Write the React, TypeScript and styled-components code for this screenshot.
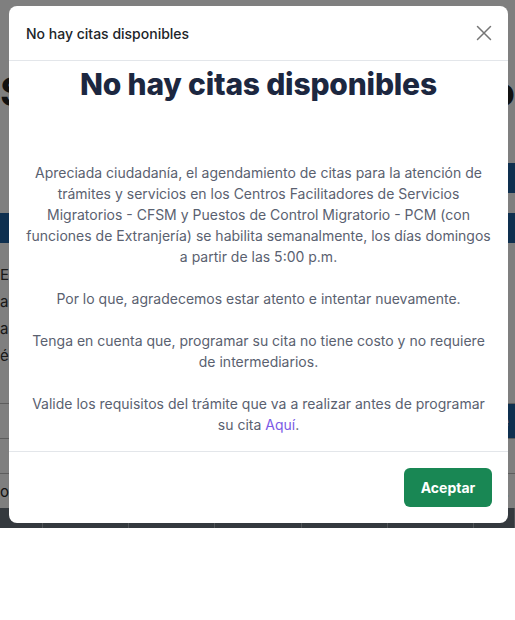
import React from 'react';
import styled, { createGlobalStyle } from 'styled-components';

const GlobalStyle = createGlobalStyle`
  html, body {
    margin: 0;
    padding: 0;
    background: #ffffff;
    font-family: Inter, "Noto Sans", sans-serif;
  }
  * { box-sizing: border-box; }
`;

// Page behind the dialog (mostly hidden)
const Page = styled.div`
  position: relative;
  height: 528px;
  overflow: hidden;
  background: #ffffff;
`;

const PageInner = styled.div`
  display: flex;
  flex-direction: column;
`;

const BigHeading = styled.div`
  height: 163px;
  padding: 72px 0 0 0;
  display: flex;
  justify-content: space-between;
  font-size: 40px;
  font-weight: 700;
  color: #222;
  line-height: 1;
`;

const BlueBar = styled.div<{ $height: number; $left?: boolean }>`
  height: ${({ $height }) => $height}px;
  display: flex;
  align-items: center;
  justify-content: space-between;
  color: #fff;
  font-size: 15px;
  & > span {
    height: 100%;
    width: 40px;
    display: flex;
    align-items: center;
    background: #1c5f9f;
  }
  & > span:first-child {
    background: ${({ $left }) => ($left ? '#1c5f9f' : 'transparent')};
    justify-content: flex-end;
  }
`;

const Spacer = styled.div<{ $height: number }>`
  height: ${({ $height }) => $height}px;
`;

const InfoLines = styled.div`
  display: flex;
  flex-direction: column;
  gap: 8px;
  padding: 22px 0 0 0;
  height: 160px;
  font-size: 15px;
  color: #333;
`;

const RuleRow = styled.div<{ $blue?: boolean }>`
  height: 35px;
  border-top: 1px solid #bbb;
  display: flex;
  align-items: center;
  justify-content: space-between;
  font-size: 15px;
  color: #222;
  & > span:last-child {
    height: 100%;
    display: flex;
    align-items: center;
    padding: 0 6px;
    background: ${({ $blue }) => ($blue ? '#1c5f9f' : 'transparent')};
    color: ${({ $blue }) => ($blue ? '#fff' : '#222')};
  }
`;

const TableHead = styled.div`
  display: grid;
  grid-template-columns: 43px 86px 86px 87px 86px 86px 1fr;
  height: 20px;
  background: #69737d;
  & > span {
    border-right: 1px solid #a0a8b0;
  }
`;

const Overlay = styled.div`
  position: absolute;
  inset: 0;
  background: rgba(0, 0, 0, 0.5);
`;

// Dialog
const Dialog = styled.div`
  position: absolute;
  left: 9px;
  top: 6px;
  width: 499px;
  height: 517px;
  background: #ffffff;
  border-radius: 8px;
  display: flex;
  flex-direction: column;
  overflow: hidden;
`;

const Header = styled.div`
  height: 55px;
  flex: none;
  display: flex;
  align-items: center;
  justify-content: space-between;
  padding: 0 14px 0 17px;
  border-bottom: 1px solid #e3e6ea;
`;

const HeaderTitle = styled.h5`
  margin: 0;
  font-size: 14px;
  font-weight: 500;
  color: #212529;
`;

const CloseButton = styled.button`
  width: 20px;
  height: 20px;
  padding: 0;
  border: 0;
  background: transparent;
  color: #767676;
  display: flex;
  align-items: center;
  justify-content: center;
  cursor: pointer;
`;

const Body = styled.div`
  flex: 1;
  min-height: 0;
  padding: 3px 16px 16px;
  text-align: center;
`;

const MainTitle = styled.h1`
  margin: 0 0 58px;
  font-size: 30px;
  font-weight: 800;
  color: #1c2740;
  letter-spacing: -0.2px;
  line-height: 40px;
`;

const Paragraph = styled.p`
  margin: 0 0 21px;
  font-size: 14px;
  line-height: 21px;
  color: #5a6170;

  &:last-child {
    margin-bottom: 0;
  }
`;

const InlineLink = styled.a`
  color: #7b5be6;
  text-decoration: none;
`;

const Footer = styled.div`
  height: 72px;
  flex: none;
  border-top: 1px solid #e3e6ea;
  display: flex;
  align-items: flex-start;
  justify-content: flex-end;
  padding: 16px 16px 0;
`;

const AcceptButton = styled.button`
  width: 88px;
  height: 39px;
  border: 0;
  border-radius: 6px;
  background: #198754;
  color: #ffffff;
  font-family: Inter, "Noto Sans", sans-serif;
  font-size: 14px;
  font-weight: 700;
  cursor: pointer;
`;

const App: React.FC = () => {
  return (
    <>
      <GlobalStyle />
      <Page>
        <PageInner>
          <BigHeading>
            <span>S</span>
            <span>o</span>
          </BigHeading>
          <BlueBar $height={30}>
            <span />
            <span />
          </BlueBar>
          <Spacer $height={20} />
          <BlueBar $height={30} $left>
            <span>nf</span>
            <span />
          </BlueBar>
          <InfoLines>
            <span>E</span>
            <span>al</span>
            <span>al</span>
            <span>éc</span>
          </InfoLines>
          <RuleRow $blue>
            <span />
            <span>le</span>
          </RuleRow>
          <RuleRow>
            <span />
            <span />
          </RuleRow>
          <RuleRow>
            <span>on</span>
            <span>s.</span>
          </RuleRow>
          <TableHead>
            <span />
            <span />
            <span />
            <span />
            <span />
            <span />
            <span />
          </TableHead>
        </PageInner>
        <Overlay />
        <Dialog role="dialog">
          <Header>
            <HeaderTitle>No hay citas disponibles</HeaderTitle>
            <CloseButton aria-label="Cerrar">
              <svg width="16" height="16" viewBox="0 0 16 16" fill="none">
                <path d="M1.5 1.5l13 13M14.5 1.5l-13 13" stroke="currentColor" strokeWidth="1.5" strokeLinecap="round" />
              </svg>
            </CloseButton>
          </Header>
          <Body>
            <MainTitle>No hay citas disponibles</MainTitle>
            <Paragraph>
              Apreciada ciudadanía, el agendamiento de citas para la atención de trámites y servicios en los
              Centros Facilitadores de Servicios Migratorios - CFSM y Puestos de Control Migratorio - PCM (con
              funciones de Extranjería) se habilita semanalmente, los días domingos a partir de las 5:00 p.m.
            </Paragraph>
            <Paragraph>Por lo que, agradecemos estar atento e intentar nuevamente.</Paragraph>
            <Paragraph>
              Tenga en cuenta que, programar su cita no tiene costo y no requiere de intermediarios.
            </Paragraph>
            <Paragraph>
              Valide los requisitos del trámite que va a realizar antes de programar su cita{' '}
              <InlineLink href="#">Aquí</InlineLink>.
            </Paragraph>
          </Body>
          <Footer>
            <AcceptButton>Aceptar</AcceptButton>
          </Footer>
        </Dialog>
      </Page>
    </>
  );
};

export default App;
